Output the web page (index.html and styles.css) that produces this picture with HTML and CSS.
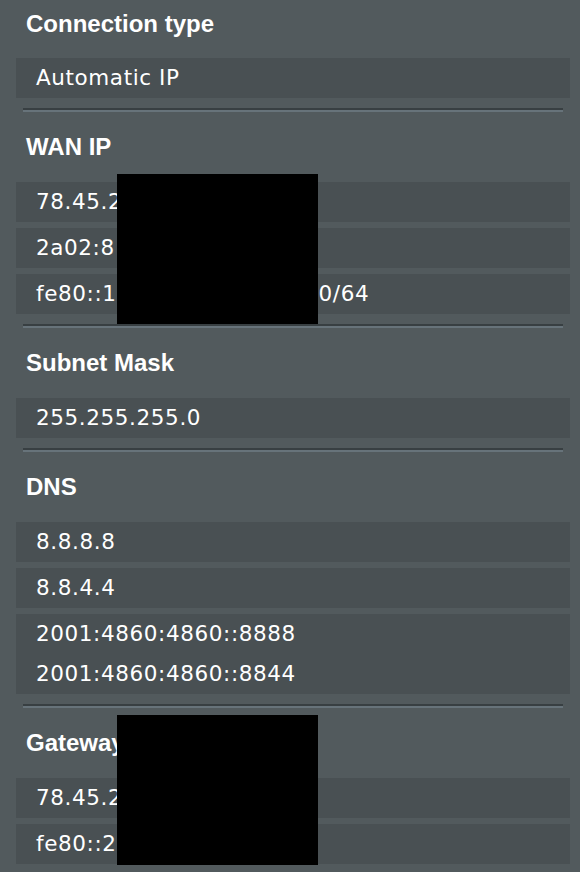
FILE: index.html
```html
<!DOCTYPE html>
<html>
<head>
<meta charset="utf-8">
<link rel="stylesheet" href="styles.css">
</head>
<body>
<div class="panel">
  <section class="group">
    <h2 class="label label-first">Connection type</h2>
    <div class="rows">
      <div class="row">Automatic IP</div>
    </div>
  </section>
  <div class="sep"></div>
  <section class="group">
    <h2 class="label">WAN IP</h2>
    <div class="rows">
      <div class="row">78.45.2</div>
      <div class="row">2a02:8</div>
      <div class="row">fe80::1<span class="hidden-run"></span>0/64</div>
    </div>
  </section>
  <div class="sep"></div>
  <section class="group">
    <h2 class="label">Subnet Mask</h2>
    <div class="rows">
      <div class="row">255.255.255.0</div>
    </div>
  </section>
  <div class="sep"></div>
  <section class="group">
    <h2 class="label">DNS</h2>
    <div class="rows">
      <div class="row">8.8.8.8</div>
      <div class="row">8.8.4.4</div>
      <div class="row">2001:4860:4860::8888<br>2001:4860:4860::8844</div>
    </div>
  </section>
  <div class="sep"></div>
  <section class="group">
    <h2 class="label">Gateway</h2>
    <div class="rows">
      <div class="row">78.45.2</div>
      <div class="row">fe80::2</div>
    </div>
  </section>
  <div class="redact redact-wan"></div>
  <div class="redact redact-gw"></div>
</div>
</body>
</html>
```
FILE: styles.css
```css
html, body {
  margin: 0;
  padding: 0;
  background: #525a5d;
}
body {
  width: 580px;
  height: 872px;
  overflow: hidden;
}
.panel {
  position: relative;
  padding: 0 10px 0 16px;
}
.group {
  display: flex;
  flex-direction: column;
}
.label {
  margin: 0;
  padding: 11px 0 11px 10px;
  font-family: "Liberation Sans", Arial, sans-serif;
  font-weight: bold;
  font-size: 24px;
  line-height: 48px;
  color: #ffffff;
  letter-spacing: 0;
}
.label-first {
  padding-top: 0;
  padding-bottom: 10px;
}
.rows {
  display: flex;
  flex-direction: column;
  gap: 6px;
}
.row {
  background: #495053;
  padding: 0 0 0 20px;
  font-family: "DejaVu Sans", Verdana, sans-serif;
  font-size: 21.5px;
  line-height: 40px;
  letter-spacing: 0.6px;
  color: #ffffff;
  white-space: nowrap;
}
.hidden-run {
  display: inline-block;
  width: 202px;
}
.sep {
  margin: 10px 7px 0 7px;
  height: 2px;
  background: #383f42;
  border-bottom: 2px solid #67737a;
}
.redact {
  position: absolute;
  left: 117px;
  width: 201px;
  height: 150px;
  background: #000000;
}
.redact-wan {
  top: 174px;
}
.redact-gw {
  top: 715px;
}
```
